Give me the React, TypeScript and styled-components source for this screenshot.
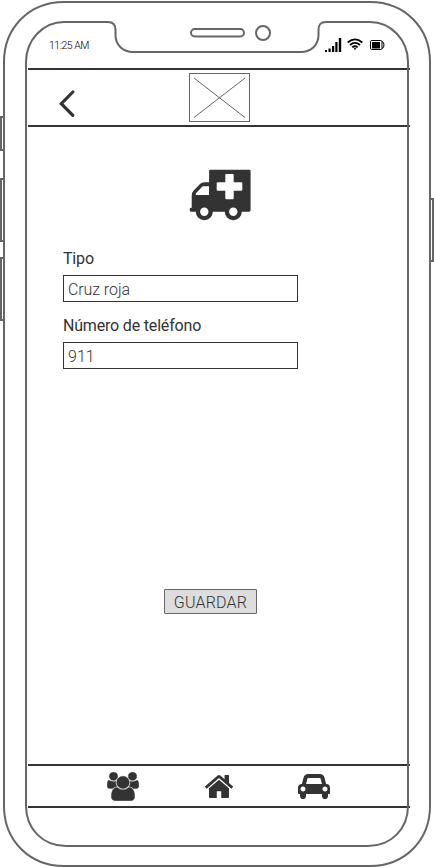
import React from "react";
import styled, { createGlobalStyle } from "styled-components";

const INK = "#333333";
const LINE = "#666666";

const GlobalStyle = createGlobalStyle`
  *, *::before, *::after { box-sizing: border-box; }
  body { margin: 0; background: #fff; overflow: hidden; }
`;

const Phone = styled.main`
  position: relative;
  width: 434px;
  height: 867px;
  padding: 36px 24px 0 28px;
  display: flex;
  flex-direction: column;
  background: #fff;
  color: ${INK};
  font-family: Roboto, "Liberation Sans", sans-serif;
`;

const Outline = styled.svg`
  position: absolute;
  inset: 0;
  pointer-events: none;
  fill: none;
  stroke: ${LINE};
  stroke-width: 2;
`;

const StatusBar = styled.div`
  display: flex;
  justify-content: space-between;
  height: 32px;
  padding: 0 25px 0 21px;
  color: #000;
`;

const Time = styled.time`
  font-size: 10.5px;
  font-weight: 300;
  line-height: 19px;
  letter-spacing: -0.48px;
`;

const StatusIcons = styled.svg`
  width: 60px;
  height: 18px;
`;

const TopBar = styled.header`
  display: grid;
  grid-template-columns: 161px 61px 1fr;
  align-items: start;
  height: 59px;
  padding-top: 3px;
  border: solid ${INK};
  border-width: 2px 0;
`;

const BackButton = styled.button`
  width: 18px;
  height: 28px;
  margin: 17px 0 0 30px;
  padding: 0;
  border: 0;
  background: none;
`;

const Logo = styled.div`
  width: 61px;
  height: 49px;
  border: 1px solid ${LINE};
`;

const Drawing = styled.svg`
  display: block;
  fill: ${INK};
`;

const Content = styled.section`
  display: flex;
  flex-direction: column;
  height: 637px;
  padding: 42px 0 0 35px;
`;

const Hero = styled.div`
  height: 52px;
  margin-left: 126px;
`;

const Field = styled.label<{ $gap: number }>`
  display: flex;
  flex-direction: column;
  width: 235px;
  margin-top: ${(p) => p.$gap}px;
`;

const Caption = styled.span`
  height: 26px;
  line-height: 20px;
  font-size: 16px;
  letter-spacing: -0.18px;
  white-space: nowrap;
`;

const TextBox = styled.input<{ $tracking: number }>`
  width: 235px;
  height: 27px;
  padding: 1px 4px 0;
  border: 1px solid ${INK};
  border-radius: 0;
  outline: 0;
  background: #fff;
  color: ${INK};
  font: 300 16px Roboto, "Liberation Sans", sans-serif;
  letter-spacing: ${(p) => p.$tracking}px;
`;

const SaveButton = styled.button`
  width: 93px;
  height: 25px;
  margin: 220px 0 0 101px;
  padding: 1px 0 0;
  border: 1px solid ${LINE};
  border-radius: 1px;
  background: #dddddd;
  color: ${INK};
  font: 300 16px Roboto, "Liberation Sans", sans-serif;
  letter-spacing: 0.2px;
`;

const TabBar = styled.nav`
  display: flex;
  align-items: flex-start;
  height: 44px;
  padding-left: 79px;
  border: solid ${INK};
  border-width: 2px 0;
`;

const Tab = styled.button<{ $left: number; $top: number }>`
  margin: ${(p) => p.$top}px 0 0 ${(p) => p.$left}px;
  padding: 0;
  border: 0;
  background: none;
`;

const DeviceOutline = () => (
  <Outline width="434" height="867" viewBox="0 0 434 867" aria-hidden="true">
    <path d="M64 2H370C405 2 430 28 430 62V806C430 840 405 866 370 866H64C29 866 4 840 4 806V62C4 28 29 2 64 2Z" />
    <path d="M64 22H108C113 22 115.500 25 115.500 30V35C115.500 45 123 52 133 52H301C311 52 318.500 45 318.500 35V30C318.500 25 320 22 326 22H370C391 22 408 40 408 62V806C408 829 391 846 368 846H66C43 846 26 829 26 806V62C26 40 43 22 64 22Z" />
    <rect x="191" y="29" width="53" height="7.500" rx="3.750" />
    <circle cx="263" cy="33" r="7" />
    <path d="M4 117H1V150H4M4 179H1V241H4M4 258H1V320H4M430 199H433V261H430" />
  </Outline>
);

export default function App() {
  return (
    <>
      <GlobalStyle />
      <Phone>
        <DeviceOutline />
        <StatusBar>
          <Time>11:25 AM</Time>
          <StatusIcons viewBox="0 0 60 18" aria-label="Señal, wifi y batería">
            <path d="M0 14h2v2H0zM3.500 12.500h2.200v3.500H3.500zM7 10h2.200v6H7zM10.300 6h2.200v10h-2.200zM13.800 2h2.400v14h-2.400z" />
            <g fill="none" stroke="#000" strokeWidth="1.800">
              <path d="M22.700 6.500Q30 .200 37.300 6.500M25 9Q30 4.800 35 9M27.300 11.400Q30 9.200 32.700 11.400" />
            </g>
            <path d="M28.600 12.600Q30 11.500 31.400 12.600L30 14Z" />
            <rect x="45.500" y="4.500" width="11.500" height="9" rx="1.200" fill="none" stroke="#000" />
            <path d="M47 6h8v6.500H47z" />
            <path d="M57 5.500q2 .500 2 3.500t-2 3.500" fill="none" stroke="#000" />
          </StatusIcons>
        </StatusBar>

        <TopBar>
          <BackButton aria-label="Volver">
            <Drawing width="18" height="28" viewBox="0 0 18 28">
              <path
                d="M14.800 2 3.300 13.700 14.800 25.300"
                fill="none"
                stroke={INK}
                strokeWidth="3.200"
                strokeLinecap="round"
              />
            </Drawing>
          </BackButton>
          <Logo>
            <Drawing width="59" height="47" viewBox="0 0 59 47">
              <path d="M4 4 55 43.500M4 43.500 55 4" fill="none" stroke={LINE} />
            </Drawing>
          </Logo>
        </TopBar>

        <Content>
          <Hero>
            <Drawing width="62" height="52" viewBox="189 169 62 52">
              <path
                fillRule="evenodd"
                d="M210.500 169.700H249.200Q250.600 169.700 250.600 171.100V210.300Q250.600 211.700 249.200 211.700H241.800A8.500 8.500 0 0 1 224.800 211.700H212.800A8.500 8.500 0 0 1 195.800 211.700H191.500Q189.700 211.700 189.700 210.200V209Q189.700 207.700 191.700 207.700V195.700Q191.700 192.500 193.500 190.700L200 184Q201.700 182.300 204.500 182.300H209.100V171.100Q209.100 169.700 210.500 169.700ZM195.700 195H209V186.300H203.500Q202.700 186.300 202.200 186.800L196.200 193Q195.700 193.500 195.700 194.200ZM226.200 174Q225.300 174 225.300 175V182.200H217.700Q216.700 182.200 216.700 183.200V189.700Q216.700 190.700 217.700 190.700H225.300V198.300Q225.300 199.300 226.300 199.300H232.700Q233.700 199.300 233.700 198.300V190.700H241.300Q242.300 190.700 242.300 189.700V183.200Q242.300 182.200 241.300 182.200H233.700V175Q233.700 174 232.700 174ZM200.100 211.700A4.200 4.200 0 1 0 208.500 211.700A4.200 4.200 0 1 0 200.100 211.700ZM229.100 211.700A4.200 4.200 0 1 0 237.500 211.700A4.200 4.200 0 1 0 229.100 211.700Z"
              />
            </Drawing>
          </Hero>
          <Field $gap={28}>
            <Caption>Tipo</Caption>
            <TextBox $tracking={-0.08} defaultValue="Cruz roja" />
          </Field>
          <Field $gap={14}>
            <Caption>Número de teléfono</Caption>
            <TextBox $tracking={0} defaultValue="911" />
          </Field>
          <SaveButton>GUARDAR</SaveButton>
        </Content>

        <TabBar>
          <Tab $left={0} $top={6} aria-label="Contactos">
            <Drawing width="32" height="29" viewBox="54 -10 1940 1812" preserveAspectRatio="none">
              <path
                stroke={INK}
                strokeWidth="28"
                d="M657 896q-162 5-265 128h-134q-82 0-138-40.500t-56-118.500q0-353 124-353 6 0 43.500 21t97.500 42.500 119 21.500q67 0 133-23-5 37-5 66 0 139 81 256zm1071 637q0 120-73 189.500t-194 69.500h-874q-121 0-194-69.500t-73-189.500q0-53 3.500-103.500t14-109 26.500-108.500 43-97.500 62-81 85.500-53.500 111.500-20q10 0 43 21.500t73 48 107 48 135 21.500 135-21.500 107-48 73-48 43-21.500q61 0 111.500 20t85.500 53.500 62 81 43 97.500 26.500 108.500 14 109 3.500 103.500zm-1024-1277q0 106-75 181t-181 75-181-75-75-181 75-181 181-75 181 75 75 181zm704 384q0 159-112.500 271.500t-271.500 112.500-271.500-112.500-112.500-271.500 112.500-271.500 271.500-112.500 271.500 112.500 112.500 271.500zm576 225q0 78-56 118.500t-138 40.500h-134q-103-123-265-128 81-117 81-256 0-29-5-66 66 23 133 23 59 0 119-21.500t97.500-42.500 43.500-21q124 0 124 353zm-128-609q0 106-75 181t-181 75-181-75-75-181 75-181 181-75 181 75 75 181z"
              />
            </Drawing>
          </Tab>
          <Tab $left={66} $top={9} aria-label="Inicio">
            <Drawing width="28" height="23" viewBox="90 250 1612 1286" preserveAspectRatio="none">
              <path d="M1472 992v480q0 26-19 45t-45 19h-384v-384h-256v384h-384q-26 0-45-19t-19-45v-480q0-1 .5-3t.5-3l575-474 575 474q1 2 1 6zm223-69l-62 74q-8 9-21 11h-3q-13 0-21-7l-692-577-692 577q-12 8-24 7-13-2-21-11l-62-74q-8-10-7-23.500t11-21.500l719-599q32-26 76-26t76 26l244 204v-195q0-14 9-23t23-9h192q14 0 23 9t9 23v408l219 182q10 8 11 21.500t-7 23.500z" />
            </Drawing>
          </Tab>
          <Tab $left={65} $top={8} aria-label="Vehículo">
            <Drawing width="32" height="25" viewBox="0 128 2048 1600">
              <path d="M480 1088q0-66-47-113t-113-47-113 47-47 113 47 113 113 47 113-47 47-113zm36-320h1016l-89-357q-2-8-14-17.500t-21-9.500h-768q-9 0-21 9.500t-14 17.500zm1372 320q0-66-47-113t-113-47-113 47-47 113 47 113 113 47 113-47 47-113zm160-96v384q0 14-9 23t-23 9h-96v128q0 80-56 136t-136 56-136-56-56-136v-128h-1024v128q0 80-56 136t-136 56-136-56-56-136v-128h-96q-14 0-23-9t-9-23v-384q0-93 65.500-158.500t158.500-65.500h28l105-419q23-94 104-157.500t179-63.500h768q98 0 179 63.500t104 157.500l105 419h28q93 0 158.500 65.500t65.500 158.500z" />
            </Drawing>
          </Tab>
        </TabBar>
      </Phone>
    </>
  );
}
